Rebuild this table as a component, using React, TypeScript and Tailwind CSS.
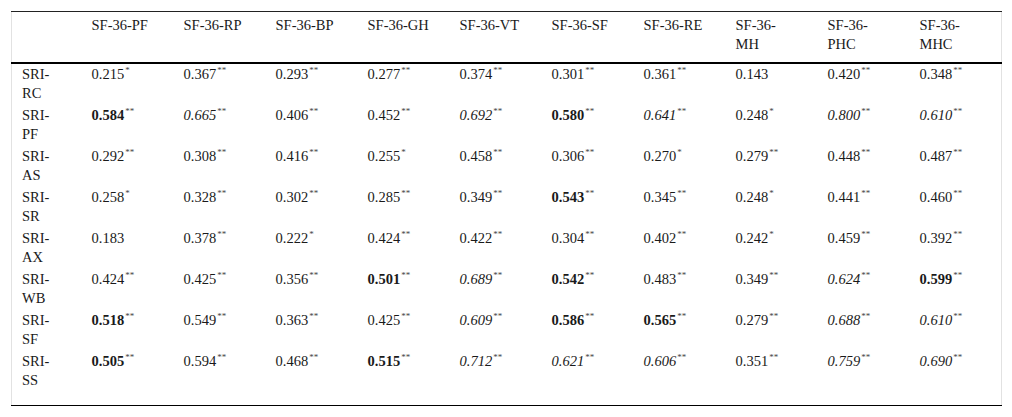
import React from 'react';

const headers = [
  'SF-36-PF',
  'SF-36-RP',
  'SF-36-BP',
  'SF-36-GH',
  'SF-36-VT',
  'SF-36-SF',
  'SF-36-RE',
  'SF-36-MH',
  'SF-36-PHC',
  'SF-36-MHC',
];

// prefix b = bold, i = italic; trailing asterisks become superscript
const rows: [string, string[]][] = [
  ['SRI-RC', ['0.215*', '0.367**', '0.293**', '0.277**', '0.374**', '0.301**', '0.361**', '0.143', '0.420**', '0.348**']],
  ['SRI-PF', ['b0.584**', 'i0.665**', '0.406**', '0.452**', 'i0.692**', 'b0.580**', 'i0.641**', '0.248*', 'i0.800**', 'i0.610**']],
  ['SRI-AS', ['0.292**', '0.308**', '0.416**', '0.255*', '0.458**', '0.306**', '0.270*', '0.279**', '0.448**', '0.487**']],
  ['SRI-SR', ['0.258*', '0.328**', '0.302**', '0.285**', '0.349**', 'b0.543**', '0.345**', '0.248*', '0.441**', '0.460**']],
  ['SRI-AX', ['0.183', '0.378**', '0.222*', '0.424**', '0.422**', '0.304**', '0.402**', '0.242*', '0.459**', '0.392**']],
  ['SRI-WB', ['0.424**', '0.425**', '0.356**', 'b0.501**', 'i0.689**', 'b0.542**', '0.483**', '0.349**', 'i0.624**', 'b0.599**']],
  ['SRI-SF', ['b0.518**', '0.549**', '0.363**', '0.425**', 'i0.609**', 'b0.586**', 'b0.565**', '0.279**', 'i0.688**', 'i0.610**']],
  ['SRI-SS', ['b0.505**', '0.594**', '0.468**', 'b0.515**', 'i0.712**', 'i0.621**', 'i0.606**', '0.351**', 'i0.759**', 'i0.690**']],
];

function Value({ raw }: { raw: string }) {
  let style = '';
  let v = raw;
  if (v[0] === 'b' || v[0] === 'i') {
    style = v[0];
    v = v.slice(1);
  }
  const m = v.match(/^([0-9.]+)(\**)$/);
  const num = m ? m[1] : v;
  const stars = m ? m[2] : '';
  return (
    <span className="whitespace-nowrap">
      <span className={style === 'b' ? 'font-bold' : style === 'i' ? 'italic' : ''}>{num}</span>
      {stars && <sup className="text-[9px] text-[#444] relative -top-[6px] ml-[1px]">{stars}</sup>}
    </span>
  );
}

export default function App() {
  return (
    <div className="w-[1012px] h-[417px] bg-white pt-[11px] pl-[11px] text-[#1a1a1a] font-['Liberation_Serif','Times_New_Roman',serif] text-[14.5px] leading-[19px]">
      <table className="table-fixed border-collapse w-[990px] border-x border-[#e2e2e2]">
        <colgroup>
          <col className="w-[70px]" />
          {headers.map((h) => (
            <col key={h} className="w-[92px]" />
          ))}
        </colgroup>
        <thead>
          <tr className="border-t border-[#222] border-b-2 border-b-black">
            <th className="h-[51px]" />
            {headers.map((h) => (
              <th key={h} className="align-top text-left font-normal pl-[10px] pr-[19.5px] pt-[4px] pb-[8px]">
                {h}
              </th>
            ))}
          </tr>
        </thead>
        <tbody className="border-b border-black">
          {rows.map(([label, vals], ri) => {
            const last = ri === rows.length - 1;
            return (
              <tr key={label}>
                <td className={`align-top pl-[10px] pr-[25px] pt-[1px] ${last ? 'pb-[15px]' : 'pb-[2px]'}`}>{label}</td>
                {vals.map((v, i) => (
                  <td key={i} className={`align-top pl-[10px] pt-[1px] ${last ? 'pb-[15px]' : 'pb-[2px]'}`}>
                    <Value raw={v} />
                  </td>
                ))}
              </tr>
            );
          })}
        </tbody>
      </table>
    </div>
  );
}
